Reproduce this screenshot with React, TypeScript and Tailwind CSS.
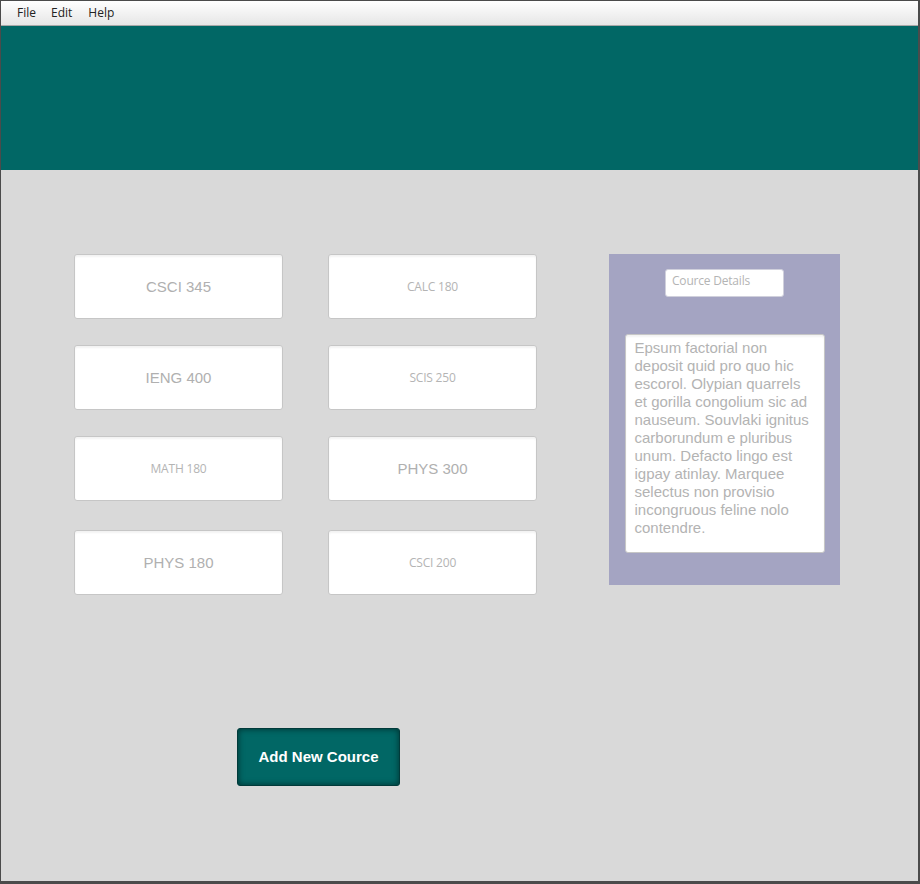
import React from "react";

const arial = "font-['Liberation_Sans',Arial,sans-serif]";
const segoe = "font-['Open_Sans','Noto_Sans',sans-serif]";

type Course = { code: string; small?: boolean };

const rows: Course[][] = [
  [{ code: "CSCI 345" }, { code: "CALC 180", small: true }],
  [{ code: "IENG 400" }, { code: "SCIS 250", small: true }],
  [{ code: "MATH 180", small: true }, { code: "PHYS 300" }],
  [{ code: "PHYS 180" }, { code: "CSCI 200", small: true }],
];

const lorem = [
  "Epsum factorial non",
  "deposit quid pro quo hic",
  "escorol. Olypian quarrels",
  "et gorilla congolium sic ad",
  "nauseum. Souvlaki ignitus",
  "carborundum e pluribus",
  "unum. Defacto lingo est",
  "igpay atinlay. Marquee",
  "selectus non provisio",
  "incongruous feline nolo",
  "contendre.",
];

function CourseCard({ course }: { course: Course }) {
  return (
    <div className="w-[209px] h-[65px] bg-white border border-[#c6c6c6] rounded-[3px] shadow-[inset_0_2px_2px_rgba(0,0,0,0.05)] flex items-center justify-center pt-[1px]">
      {course.small ? (
        <span className={`${segoe} text-[12px] text-[#b4b4b4] tracking-[-0.2px]`}>{course.code}</span>
      ) : (
        <span className={`${arial} text-[15px] text-[#b0b0b0]`}>{course.code}</span>
      )}
    </div>
  );
}

export default function App() {
  return (
    <div className="w-[920px] h-[884px] bg-[#d9d9d9] border-t border-l border-r-2 border-b-[3px] border-[#4b4b4b] flex flex-col overflow-hidden">
      {/* menu bar */}
      <div className={`${segoe} h-[25px] shrink-0 bg-gradient-to-b from-white to-[#e6e6e6] border-b border-[#a8a8a8] flex items-center pl-[16px] gap-[15px] text-[12px] text-[#222]`}>
        <span>File</span>
        <span>Edit</span>
        <span className="ml-[1px]">Help</span>
      </div>

      {/* header band */}
      <div className="h-[144px] shrink-0 bg-[#016765]" />

      {/* body */}
      <div className="flex-1 pl-[73px] pt-[84px]">
        <div className="flex">
          <div className="flex flex-col">
            {rows.map((row, i) => (
              <div key={i} className={`flex gap-[45px] ${i === 0 ? "" : i === 3 ? "mt-[29px]" : "mt-[26px]"}`}>
                {row.map((c) => (
                  <CourseCard key={c.code} course={c} />
                ))}
              </div>
            ))}
          </div>

          {/* details panel */}
          <div className="ml-[72px] w-[231px] h-[331px] bg-[#a4a4c2] flex flex-col items-center pt-[15px]">
            <div className={`${segoe} w-[119px] h-[28px] bg-white rounded-[3px] border border-[#d0d0dc] pl-[6px] pt-[2px] text-[12px] text-[#b4b4b4] tracking-[-0.2px]`}>
              Cource Details
            </div>
            <div className={`${arial} mt-[37px] w-[200px] h-[219px] bg-white rounded-[3px] border border-[#c6c6c6] shadow-[inset_0_2px_2px_rgba(0,0,0,0.05)] pl-[9px] pt-[4px] text-[15px] leading-[18px] text-[#b3b3b3]`}>
              {lorem.map((l) => (
                <div key={l} className="whitespace-nowrap">{l}</div>
              ))}
            </div>
          </div>
        </div>

        <div className="mt-[133px] ml-[163px]">
          <button className={`${arial} w-[163px] h-[58px] bg-[#016765] rounded-[3px] border border-[#013a3a] shadow-[inset_0_0_6px_rgba(0,0,0,0.55)] text-white font-bold text-[15px]`}>
            Add New Cource
          </button>
        </div>
      </div>
    </div>
  );
}
